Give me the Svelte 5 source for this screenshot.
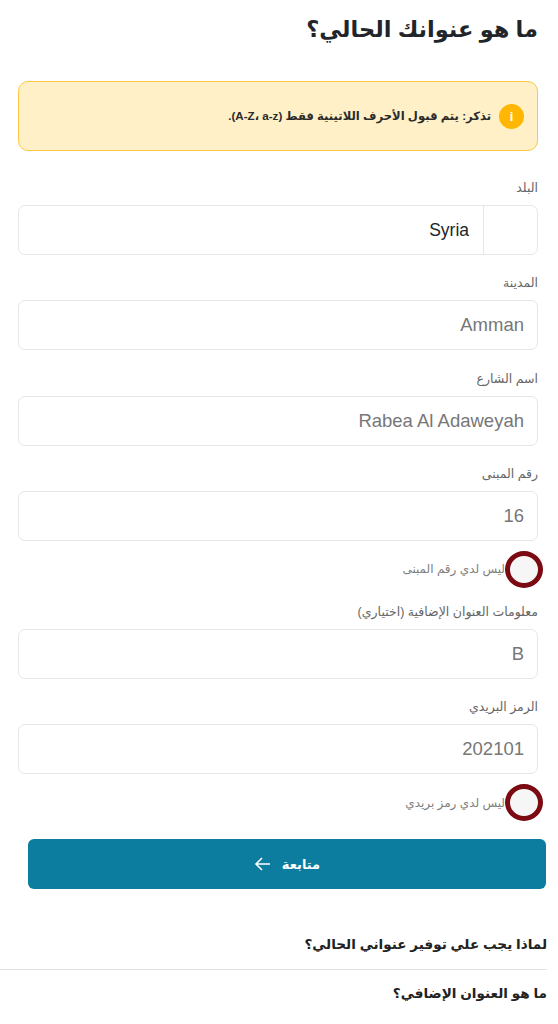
<script>
  const fields = [
    { label: "المدينة", value: "Amman" },
    { label: "اسم الشارع", value: "Rabea Al Adaweyah" },
    { label: "رقم المبنى", value: "16", check: "ليس لدي رقم المبنى" },
    { label: "معلومات العنوان الإضافية (اختياري)", value: "B" },
    { label: "الرمز البريدي", value: "202101", check: "ليس لدي رمز بريدي" }
  ];
</script>

<div class="page" dir="rtl">
  <div class="form">
    <h1>ما هو عنوانك الحالي؟</h1>

    <div class="alert">
      <span class="alert-icon">i</span>
      <span class="alert-text">تذكر: يتم قبول الأحرف اللاتينية فقط (A-Z، a-z).</span>
    </div>

    <div class="field">
      <div class="label">البلد</div>
      <div class="input select">
        <span class="flag"></span>
        <span class="value" dir="ltr">Syria</span>
      </div>
    </div>

    {#each fields as f}
      <div class="field">
        <div class="label">{f.label}</div>
        <div class="input">
          <span class="value muted" dir="ltr">{f.value}</span>
        </div>
      </div>
      {#if f.check}
        <div class="check">
          <span class="radio"></span>
          <span class="check-text">{f.check}</span>
        </div>
      {/if}
    {/each}
  </div>

  <button class="next">
    <span>متابعة</span>
    <svg width="18" height="16" viewBox="0 0 18 16" fill="none" stroke="#fff" stroke-width="1.6">
      <path d="M16 8H2M8 2L2 8l6 6" />
    </svg>
  </button>

  <div class="faq">
    <div class="faq-item first">لماذا يجب علي توفير عنواني الحالي؟</div>
    <div class="faq-item">ما هو العنوان الإضافي؟</div>
  </div>
</div>

<style>
  :global(body) {
    margin: 0;
    background: #fff;
  }

  .page {
    width: 558px;
    height: 1024px;
    overflow: hidden;
    box-sizing: border-box;
    font-family: "Liberation Sans", "DejaVu Sans", sans-serif;
    color: #212529;
  }

  .form {
    padding: 0 20px;
    margin-left: -2px;
  }

  h1 {
    margin: 0;
    padding-top: 13px;
    height: 81px;
    box-sizing: border-box;
    font-size: 22.5px;
    line-height: 34px;
    font-weight: 700;
  }

  .alert {
    height: 70px;
    box-sizing: border-box;
    display: flex;
    align-items: center;
    gap: 8px;
    padding: 0 13px;
    background: #fff0c7;
    border: 1.5px solid #fdc74a;
    border-radius: 10px;
  }

  .alert-icon {
    width: 25px;
    height: 25px;
    border-radius: 50%;
    background: #ffb703;
    color: #fff;
    font-size: 13px;
    font-weight: 700;
    display: flex;
    align-items: center;
    justify-content: center;
  }

  .alert-text {
    font-size: 11.6px;
    font-weight: 700;
    color: #2b2b2b;
  }

  .field {
    margin-top: 20.33px;
  }

  .alert + .field {
    margin-top: 29px;
  }

  .check + .field {
    margin-top: 16px;
  }

  .label {
    font-size: 12.5px;
    line-height: 17px;
    color: #666;
    height: 25px;
  }

  .input {
    height: 50px;
    box-sizing: border-box;
    display: flex;
    align-items: center;
    padding: 0 13px;
    border: 1.5px solid #e6e6e6;
    border-radius: 7px;
    background: #fff;
    font-size: 18.5px;
  }

  .select {
    padding: 0;
    font-size: 17.5px;
  }

  .flag {
    width: 40px;
    height: 100%;
    border-left: 1.5px solid #e6e6e6;
    margin-left: 14px;
    margin-right: 13px;
  }

  .value {
    color: #212529;
  }

  .value.muted {
    color: #777;
  }

  .check {
    display: flex;
    align-items: center;
    height: 37px;
    margin-top: 10px;
    margin-right: -5px;
  }

  .radio {
    width: 28px;
    height: 27px;
    border: 5px solid #7b0a12;
    border-radius: 50%;
    background: #f6f6f6;
    flex: none;
  }

  .check-text {
    font-size: 12px;
    color: #808080;
  }

  .next {
    display: flex;
    align-items: center;
    justify-content: center;
    gap: 10px;
    width: 518px;
    height: 50px;
    margin: 18px 12px 0 0;
    border: 0;
    border-radius: 6px;
    background: #0c7d9e;
    color: #fff;
    font-family: inherit;
    font-size: 13px;
    font-weight: 700;
  }

  .faq {
    margin-top: 44px;
    width: 547px;
    margin-right: 11px;
  }

  .faq-item {
    font-size: 13.6px;
    font-weight: 700;
    line-height: 24px;
    padding-bottom: 12px;
    color: #222;
  }

  .faq-item.first {
    border-bottom: 1px solid #e3e3e3;
    margin-bottom: 12px;
  }
</style>
